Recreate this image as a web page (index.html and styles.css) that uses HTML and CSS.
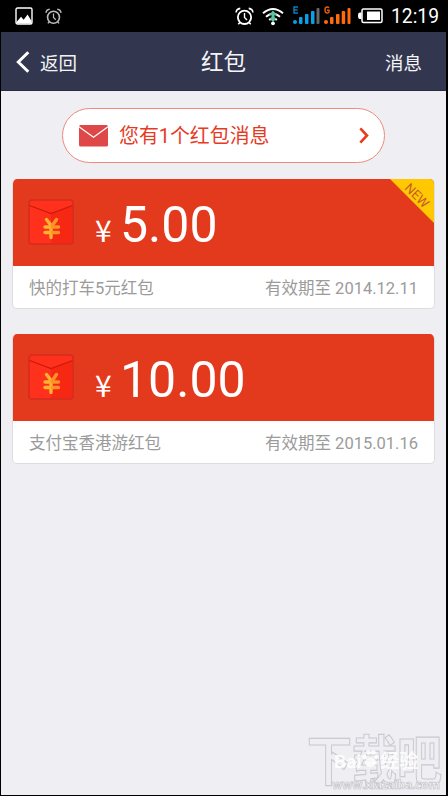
FILE: index.html
```html
<!DOCTYPE html>
<html lang="zh-CN">
<head>
<meta charset="utf-8">
<title>红包</title>
<link rel="stylesheet" href="styles.css">
</head>
<body>
<svg class="defs" width="0" height="0">
  <defs>
    <symbol id="alarm" viewBox="0 0 18 18">
      <g fill="none" stroke="currentColor">
        <circle cx="9" cy="9.800" r="6.300" stroke-width="1.700"/>
        <path d="M9 5.800v4.200l2.400 2.400" stroke-width="1.300"/>
        <path d="M1 5.200C1.200 3 2.800 1.600 5 1.300M17 5.200C16.800 3 15.200 1.600 13 1.300M4.600 14.600l-1.500 1.700M13.400 14.600l1.500 1.700" stroke-width="1.500"/>
      </g>
    </symbol>
    <symbol id="envelope" viewBox="0 0 46 46">
      <rect x="1" y="1" width="44" height="44" rx="3" fill="#ff301c" stroke="#d32c20" stroke-width="1.500"/>
      <path d="M23 14L44 7v34q0 3-3 3H23z" fill="#f62713"/>
      <path d="M2 5q0-3 3-3h36q3 0 3 3v1.500L23 14.500 2 6.500z" fill="#ff301c"/>
      <path d="M1.500 6.500L23 14.600 44.500 6.500" fill="none" stroke="#c91b0d" stroke-width="1.300"/>
      <g fill="none" stroke-width="3.400" stroke-linecap="round">
        <path d="M18.500 20.500l5 6.500M17 28h6M17 33.500h6M23 27v11.500" stroke="#ffb331"/>
        <path d="M28.500 20.500l-4.500 6.500M24.500 28h6M24.500 33.500h6" stroke="#ff9328"/>
      </g>
    </symbol>
  </defs>
</svg>
<div class="phone">
  <div class="status">
    <svg class="gallery" width="18" height="18" viewBox="0 0 18 18"><rect x="1" y="1" width="16" height="16" rx="1.500" fill="none" stroke="#fff" stroke-width="1.400"/><path d="M1.500 16.500V15L6 9.800l2.700 3L12.600 7.500l3.900 6.500v2.500z" fill="#fff"/></svg>
    <svg class="alarm-small" width="17" height="17"><use href="#alarm"/></svg>
    <span class="spacer"></span>
    <svg class="alarm-big" width="19" height="19"><use href="#alarm"/></svg>
    <svg class="wifi" width="22" height="19" viewBox="0 0 22 19"><g fill="none" stroke="#fff" stroke-width="2"><path d="M1 6.300q10-8.500 20 0M4 9.800q7-6 14 0M7.200 13q3.800-3.200 7.600 0"/></g><path d="M11 3.500l4 4.500h-2.500v3H15l-4 4-4-4h2.500V8H7z" fill="#58c5a0"/><circle cx="11" cy="16.300" r="1.900" fill="#fff"/></svg>
    <svg class="signal" width="27" height="20" viewBox="0 0 27 20"><path d="M5 1H1v6h4M1 4h3.500" fill="none" stroke="#0b7fc0" stroke-width="1.400"/><g fill="#08a0e9"><rect x="0" y="14" width="4" height="4" rx="2"/><rect x="6" y="11" width="3.500" height="7" rx="1"/><rect x="12" y="8" width="3.500" height="10" rx="1"/><rect x="18" y="5" width="3.500" height="13" rx="1"/></g><rect x="23.500" y="2" width="3" height="16" rx="1" fill="#666"/></svg>
    <svg class="signal2" width="27" height="20" viewBox="0 0 27 20"><path d="M5 1.800Q4.500 1 3.200 1 1 1 1 4t2.200 3Q5 7 5 6V4.300H3" fill="none" stroke="#e75b0b" stroke-width="1.400"/><g fill="#ff6b0b"><rect x="0" y="14" width="4" height="4" rx="2"/><rect x="6" y="11" width="3.500" height="7" rx="1"/><rect x="12" y="8" width="3.500" height="10" rx="1"/><rect x="17.700" y="5" width="3.500" height="13" rx="1"/><rect x="23.500" y="2" width="3" height="16" rx="1"/></g></svg>
    <svg class="battery" width="25" height="16" viewBox="0 0 25 16"><rect x="4" y="1" width="20" height="13.500" rx="1.500" fill="none" stroke="#fff" stroke-width="1.500"/><rect x="9" y="3.500" width="13" height="8.500" fill="#fff"/><path d="M3.500 4.500H2Q0 4.500 0 7.800t2 3.200h1.500z" fill="#fff"/></svg>
    <span class="clock">12:19</span>
  </div>
  <header class="nav">
    <div class="back">
      <svg width="14" height="22" viewBox="0 0 14 22"><path d="M12.300 1.200L2.300 11l10 9.800" fill="none" stroke="#fff" stroke-width="3"/></svg>
      <span>返回</span>
    </div>
    <h1>红包</h1>
    <span class="messages">消息</span>
  </header>
  <main>
    <div class="notice">
      <svg width="29" height="22" viewBox="0 0 29 22"><rect width="29" height="21.500" rx="1.500" fill="#df4848"/><path d="M0 1.700l14.500 10.500L29 1.700" fill="none" stroke="#fff" stroke-width="1.300"/></svg>
      <span class="notice-text">您有1个红包消息</span>
      <svg class="chevron" width="10" height="17" viewBox="0 0 10 17"><path d="M1.300 1.300l6.700 7.200-6.700 7.200" fill="none" stroke="#e63b1f" stroke-width="2.600"/></svg>
    </div>
    <section class="card">
      <div class="card-top">
        <svg class="packet" width="46" height="46"><use href="#envelope"/></svg>
        <span class="yen">¥</span><span class="amount">5.00</span>
        <div class="ribbon"><span>NEW</span></div>
      </div>
      <div class="card-foot"><span>快的打车5元红包</span><span>有效期至 2014.12.11</span></div>
    </section>
    <section class="card">
      <div class="card-top">
        <svg class="packet" width="46" height="46"><use href="#envelope"/></svg>
        <span class="yen">¥</span><span class="amount">10.00</span>
      </div>
      <div class="card-foot"><span>支付宝香港游红包</span><span>有效期至 2015.01.16</span></div>
    </section>
  </main>
  <div class="watermark">
    <div class="wm-big">下载吧</div>
    <div class="wm-baidu">Bai<svg width="19" height="19" viewBox="0 0 15 17"><g fill="#fff"><ellipse cx="7.500" cy="12" rx="5" ry="4"/><circle cx="2" cy="7" r="2"/><circle cx="5.500" cy="3" r="2.200"/><circle cx="10" cy="3" r="2.200"/><circle cx="13" cy="7" r="2"/></g></svg>经验</div>
    <div class="wm-url">www.xiazaiba.com</div>
  </div>
</div>
</body>
</html>
```

FILE: styles.css
```css
* { box-sizing: border-box; }
body {
  margin: 0;
  background: #000;
  font-family: Roboto, "Noto Sans CJK SC", sans-serif;
}
.defs { display: none; }
.phone {
  position: relative;
  width: 448px;
  height: 796px;
  border: solid #000;
  border-width: 0 2px 1px 1px;
  background: #efeef3;
  overflow: hidden;
}
.status {
  display: flex;
  align-items: center;
  height: 32px;
  padding: 0 7px 0 14px;
  background: #000;
  color: #fff;
}
.status svg { flex: none; }
.alarm-small { margin-left: 12px; color: #bbb; }
.spacer { flex: 1; }
.wifi { margin-left: 8px; }
.signal { margin-left: 9px; }
.signal2 { margin-left: 4px; }
.battery { margin-left: 7px; }
.clock {
  width: 48px;
  margin-left: 8px;
  padding-top: 2px;
  font-size: 19.3px;
  line-height: 32px;
  white-space: nowrap;
}
.nav {
  display: grid;
  grid-template-columns: 1fr auto 1fr;
  align-items: center;
  height: 59px;
  padding: 1px 24px 0 15px;
  background: #32364f;
  border-bottom: 1px solid #292c42;
  color: #f4f4f6;
  font-size: 18.5px;
}
.back { display: flex; align-items: center; gap: 10px; }
.nav h1 {
  margin: 0 0 0 9px;
  font-size: 22.5px;
  font-weight: 400;
  line-height: 30px;
}
.messages { justify-self: end; }
main { padding: 17px 11px 0; }
.notice {
  display: flex;
  align-items: center;
  width: 323px;
  height: 55px;
  margin: 0 0 16px 50px;
  padding: 0 15px 0 16px;
  border: 1px solid #ee8a7b;
  border-radius: 28px;
  background: #fff;
  color: #e63b1f;
}
.notice-text {
  margin-left: 11px;
  padding-top: 3px;
  font-size: 19.9px;
  line-height: 28px;
}
.chevron { margin-left: auto; }
.card {
  height: 130px;
  margin-bottom: 25px;
  border: 1px solid #dddce1;
  border-top: 0;
  border-radius: 5px;
  background: #fff;
  overflow: hidden;
}
.card-top {
  position: relative;
  display: flex;
  align-items: baseline;
  height: 87px;
  margin: 0 -1px;
  padding-left: 16px;
  background: #e33a1e;
  color: #fff;
}
.packet { align-self: flex-start; margin-top: 20px; }
.yen {
  width: 19px;
  margin-left: 21px;
  font-family: "Noto Sans CJK SC", sans-serif;
  font-size: 30px;
  line-height: 44px;
}
.amount { margin-left: 6px; font-size: 50px; line-height: 93px; }
.ribbon {
  position: absolute;
  top: 0;
  right: 0;
  width: 45px;
  height: 45px;
  background: #ffc800;
  clip-path: polygon(0 0, 100% 0, 100% 100%);
}
.ribbon span {
  position: absolute;
  top: 9px;
  left: 10px;
  width: 34px;
  color: #c55b2c;
  font-size: 13px;
  line-height: 15px;
  text-align: center;
  transform: rotate(45deg);
}
.card-foot {
  display: flex;
  justify-content: space-between;
  padding: 1px 16px 0 16px;
  color: #9b9b9b;
  font-size: 16.5px;
  line-height: 43px;
}
.watermark {
  position: absolute;
  left: 306px;
  top: 729px;
  width: 138px;
  height: 64px;
  font-weight: 700;
  white-space: nowrap;
}
.wm-big {
  color: #efeef3;
  font-size: 45px;
  line-height: 60px;
  transform: scaleY(1.2);
  transform-origin: 0 8px;
  -webkit-text-stroke: 1px #cbcacf;
}
.wm-baidu {
  position: absolute;
  left: 27px;
  top: 20px;
  color: #fff;
  font-size: 19px;
  line-height: 24px;
  opacity: .85;
}
.wm-url {
  position: absolute;
  left: 25px;
  top: 48px;
  color: #f6f5f9;
  font-family: "Open Sans", sans-serif;
  font-size: 12px;
  line-height: 15px;
  letter-spacing: -.3px;
  -webkit-text-stroke: .6px #bebdc2;
}
```
